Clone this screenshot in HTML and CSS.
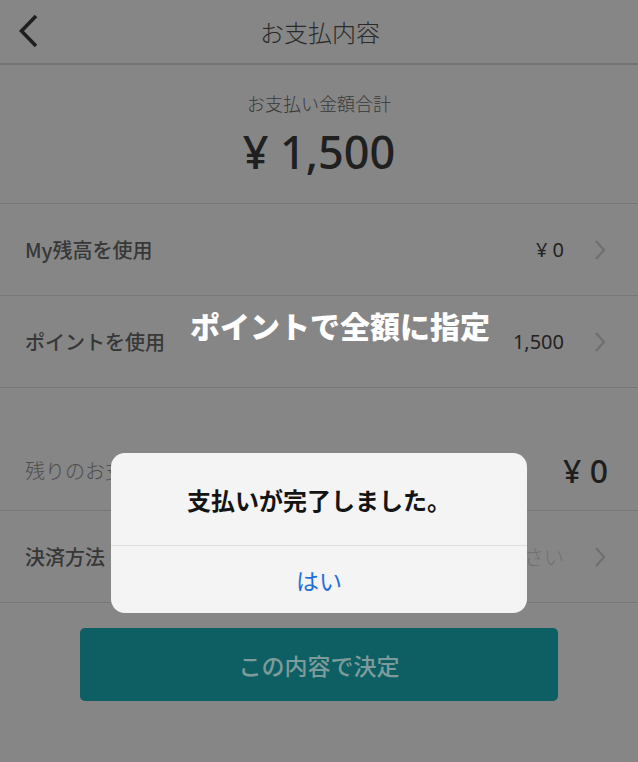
FILE: index.html
```html
<!DOCTYPE html>
<html lang="ja">
<head>
<meta charset="utf-8">
<title>お支払内容</title>
<link rel="stylesheet" href="styles.css">
</head>
<body>
<div class="page">
  <header class="header">
    <svg class="back" width="24" height="34" viewBox="0 0 24 34"><path d="M19 2 L4.5 17 L19 32" fill="none" stroke="#1f1f1f" stroke-width="3.6"/></svg>
    <h1 class="title">お支払内容</h1>
  </header>
  <section class="total">
    <div class="total-label">お支払い金額合計</div>
    <div class="total-amount">¥ 1,500</div>
  </section>
  <div class="row">
    <span class="label bold">My残高を使用</span>
    <span class="value">¥ 0</span>
    <svg class="chev" width="12" height="22" viewBox="0 0 12 22"><path d="M2 2 L10 11 L2 20" fill="none" stroke="#6e6e6e" stroke-width="2"/></svg>
  </div>
  <div class="row">
    <span class="label bold">ポイントを使用</span>
    <span class="value">1,500</span>
    <svg class="chev" width="12" height="22" viewBox="0 0 12 22"><path d="M2 2 L10 11 L2 20" fill="none" stroke="#6e6e6e" stroke-width="2"/></svg>
  </div>
  <div class="spacer"></div>
  <div class="row row-remain">
    <span class="label light">残りのお支払い金額</span>
    <span class="value big">¥ 0</span>
  </div>
  <div class="row">
    <span class="label bold">決済方法</span>
    <span class="value muted">選択してください</span>
    <svg class="chev" width="12" height="22" viewBox="0 0 12 22"><path d="M2 2 L10 11 L2 20" fill="none" stroke="#6e6e6e" stroke-width="2"/></svg>
  </div>
  <div class="action">
    <button class="submit">この内容で決定</button>
  </div>

  <div class="caption">ポイントで全額に指定</div>

  <div class="dialog">
    <div class="dialog-msg">支払いが完了しました。</div>
    <div class="dialog-btn">はい</div>
  </div>
</div>
</body>
</html>
```

FILE: styles.css
```css
* { box-sizing: border-box; }
html, body {
  margin: 0;
  padding: 0;
  background: #868686;
}
body {
  font-family: "Noto Sans CJK JP", "Noto Sans", sans-serif;
  width: 638px;
  height: 762px;
  overflow: hidden;
}
.page {
  position: relative;
  width: 638px;
  height: 762px;
  display: flex;
  flex-direction: column;
}
.header {
  height: 65px;
  border-bottom: 2px solid #747474;
  display: flex;
  align-items: center;
  justify-content: center;
  position: relative;
}
.back {
  position: absolute;
  left: 17px;
  top: 14px;
}
.title {
  margin: 0;
  font-size: 24px;
  font-weight: 300;
  color: #2a2a2a;
  padding-left: 2px;
}
.total {
  height: 139px;
  border-bottom: 1px solid #777;
  display: flex;
  flex-direction: column;
  align-items: center;
  padding-top: 23px;
}
.total-label {
  font-size: 18px;
  color: #383838;
  font-weight: 300;
  line-height: 30px;
}
.total-amount {
  font-family: "Noto Sans", sans-serif;
  font-size: 45px;
  font-weight: 500;
  color: #202020;
  line-height: 56px;
  margin-top: 6px;
}
.row {
  height: 92px;
  border-bottom: 1px solid #777;
  display: flex;
  align-items: center;
  padding: 0 32px 0 25px;
}
.label {
  font-size: 20px;
  color: #373737;
  flex: 1;
}
.label.bold { font-weight: 500; }
.label.light { font-weight: 300; color: #4e4e4e; }
.value {
  font-size: 20px;
  color: #222;
  margin-right: 30px;
  font-family: "Noto Sans", "Noto Sans CJK JP", sans-serif;
}
.value.big {
  font-size: 32px;
  font-weight: 500;
  margin-right: -2px;
  color: #1e1e1e;
}
.value.muted {
  color: #707070;
  font-weight: 300;
  font-family: "Noto Sans CJK JP", sans-serif;
}
.chev { flex: none; }
.spacer {
  height: 42px;
}
.row-remain {
  height: 81px;
}
.action {
  padding: 25px 80px 0 80px;
}
.submit {
  width: 478px;
  height: 73px;
  border: none;
  border-radius: 5px;
  background: #0d5f63;
  color: #7e9b9b;
  font-family: "Noto Sans CJK JP", sans-serif;
  font-size: 23px;
  font-weight: 500;
}
.caption {
  position: absolute;
  left: 0;
  right: 0;
  top: 303px;
  text-align: center;
  font-size: 30px;
  font-weight: 900;
  color: #fff;
  line-height: 44px;
  padding-left: 42px;
}
.dialog {
  position: absolute;
  left: 111px;
  top: 453px;
  width: 416px;
  height: 160px;
  background: #f4f4f4;
  border-radius: 14px;
  display: flex;
  flex-direction: column;
}
.dialog-msg {
  height: 93px;
  border-bottom: 1px solid #dedede;
  display: flex;
  align-items: center;
  justify-content: center;
  font-size: 24px;
  font-weight: 700;
  color: #141414;
}
.dialog-btn {
  flex: 1;
  display: flex;
  align-items: center;
  justify-content: center;
  font-size: 23px;
  color: #1f6fd7;
}
```
